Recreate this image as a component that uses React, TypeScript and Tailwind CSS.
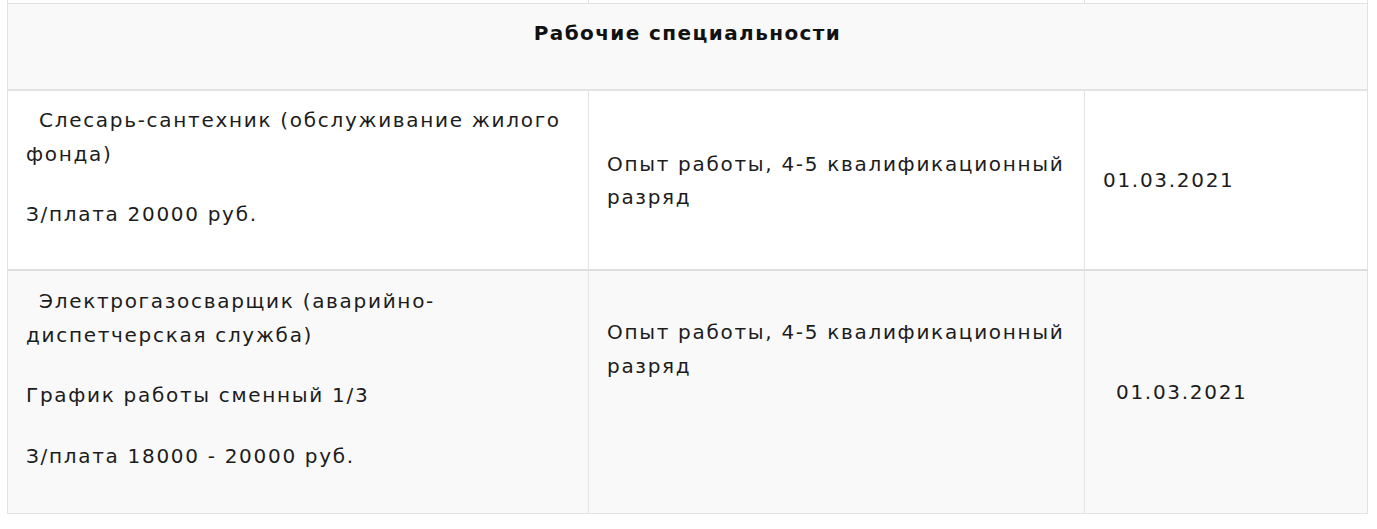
import React from 'react'

const font = { fontFamily: '"DejaVu Sans", "Noto Sans", sans-serif' }

const cell = 'border-r border-[#e3e3e3]'

function Lines({ children }: { children: React.ReactNode }) {
  return <p className="text-[20px] leading-[33.5px] tracking-[1.7px]">{children}</p>
}

export default function App() {
  return (
    <div className="min-h-[529px] bg-white text-[#1c1c1c]" style={font}>
      <div className="ml-[7px] w-[1361px] border-l border-[#e3e3e3]">
        {/* tail of the row above */}
        <div className="grid h-[3px] grid-cols-[581px_496px_1fr]">
          <div className={cell} />
          <div className={cell} />
          <div className={cell} />
        </div>

        <div className="flex h-[88px] justify-center border-y border-b-2 border-r border-[#e3e3e3] bg-[#f9f9f9] pt-[12px]">
          <h3 className="text-[20px] font-bold leading-[34px] tracking-[1.4px] text-[#111]">Рабочие специальности</h3>
        </div>

        <div className="grid h-[180px] grid-cols-[581px_496px_1fr] border-b-2 border-[#dedede] bg-white">
          <div className={`${cell} flex flex-col gap-[27px] px-[18px] pt-[13px]`}>
            <Lines>
              <span className="pl-[13px]">Слесарь-сантехник (обслуживание жилого фонда)</span>
            </Lines>
            <Lines>З/плата 20000 руб.</Lines>
          </div>
          <div className={`${cell} flex items-center px-[18px] pt-[2px]`}>
            <Lines>Опыт работы, 4-5 квалификационный разряд</Lines>
          </div>
          <div className={`${cell} flex items-center px-[18px] pt-[2px]`}>
            <Lines>01.03.2021</Lines>
          </div>
        </div>

        <div className="grid h-[243px] grid-cols-[581px_496px_1fr] border-b border-[#e3e3e3] bg-[#f9f9f9]">
          <div className={`${cell} flex flex-col gap-[27px] px-[18px] pt-[14px]`}>
            <Lines>
              <span className="pl-[13px]">Электрогазосварщик (аварийно-диспетчерская служба)</span>
            </Lines>
            <Lines>График работы сменный 1/3</Lines>
            <Lines>З/плата 18000 - 20000 руб.</Lines>
          </div>
          <div className={`${cell} px-[18px] pt-[45px]`}>
            <Lines>Опыт работы, 4-5 квалификационный разряд</Lines>
          </div>
          <div className={`${cell} flex items-center px-[18px] pt-[2px]`}>
            <Lines>
              <span className="pl-[13px]">01.03.2021</span>
            </Lines>
          </div>
        </div>
      </div>
    </div>
  )
}
